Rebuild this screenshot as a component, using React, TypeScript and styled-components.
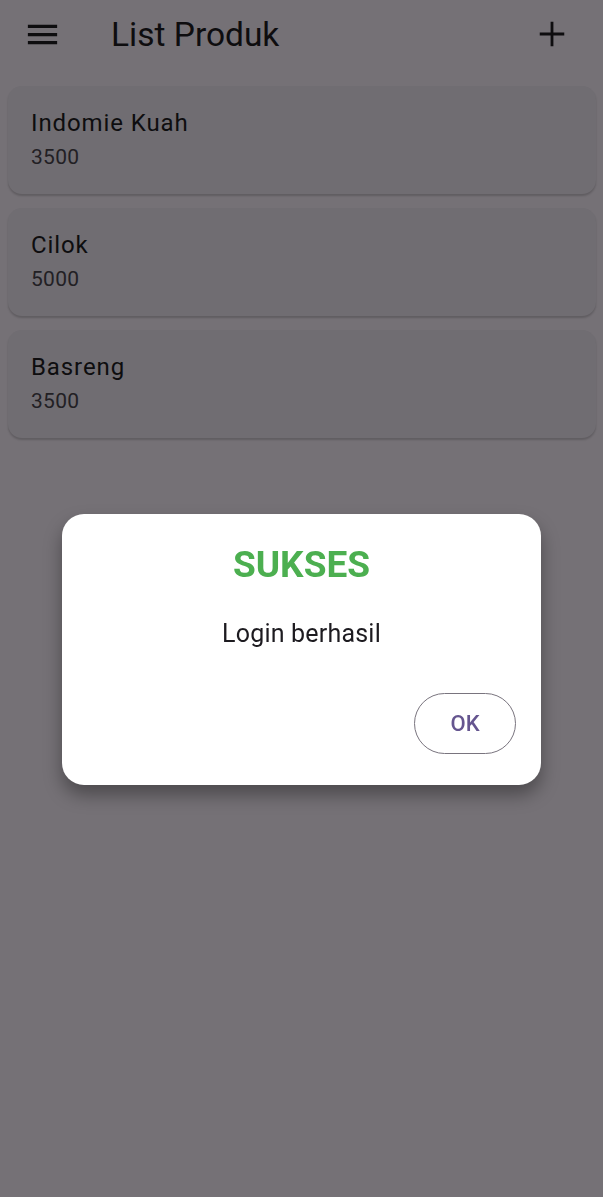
import styled, { createGlobalStyle } from 'styled-components'

const GlobalStyle = createGlobalStyle`
  html, body {
    margin: 0;
    padding: 0;
    background: #757176;
    font-family: Roboto, 'Noto Sans', sans-serif;
  }
`

const Page = styled.div`
  min-height: 1197px;
  background: #757176;
`

const AppBar = styled.header`
  height: 68px;
  display: flex;
  align-items: center;
  padding: 0 30px 0 23px;
`

const IconButton = styled.button<{ $size: number }>`
  width: ${({ $size }) => $size}px;
  height: ${({ $size }) => $size}px;
  padding: 0;
  border: none;
  background: none;
  display: flex;
  align-items: center;
  justify-content: center;
  color: #0e0d0f;
`

const Title = styled.h1`
  flex: 1;
  margin: 0 0 0 49px;
  font-size: 33.5px;
  font-weight: 400;
  color: #0e0d0f;
  letter-spacing: 0;
`

const List = styled.div`
  display: flex;
  flex-direction: column;
  gap: 14px;
  padding: 18px 7px 0 8px;
`

const Card = styled.div`
  height: 108px;
  box-sizing: border-box;
  padding: 18px 23px 20px;
  background: #706d72;
  border-radius: 14px;
  box-shadow: 0 2px 2px rgba(0, 0, 0, 0.18);
  display: flex;
  flex-direction: column;
  justify-content: center;
  gap: 8px;
`

const ItemName = styled.div`
  font-size: 24px;
  line-height: 28px;
  color: #0e0d0f;
  letter-spacing: 0.9px;
`

const ItemPrice = styled.div`
  font-size: 21px;
  line-height: 24px;
  color: #222024;
  letter-spacing: 0.3px;
`

const Overlay = styled.div`
  position: fixed;
  inset: 0;
  display: flex;
  justify-content: center;
  align-items: flex-start;
  padding-top: 514px;
`

const Dialog = styled.div`
  width: 479px;
  height: 271px;
  box-sizing: border-box;
  background: #fff;
  border-radius: 22px;
  box-shadow: 0 10px 18px rgba(0, 0, 0, 0.35);
  padding: 28px 25px 31px;
  display: flex;
  flex-direction: column;
  align-items: center;
`

const DialogTitle = styled.h2`
  margin: 0;
  font-size: 37px;
  line-height: 46px;
  font-weight: 700;
  color: #4caf50;
`

const DialogText = styled.p`
  margin: 31px 0 0;
  font-size: 25px;
  line-height: 30px;
  color: #1d1b20;
  letter-spacing: 0.2px;
`

const Actions = styled.div`
  margin-top: auto;
  align-self: stretch;
  display: flex;
  justify-content: flex-end;
`

const OutlineButton = styled.button`
  width: 102px;
  height: 61px;
  border: 1.5px solid #79747e;
  border-radius: 31px;
  background: #fff;
  font-family: Roboto, sans-serif;
  font-size: 22px;
  font-weight: 500;
  color: #65558f;
`

const products = [
  { name: 'Indomie Kuah', price: 3500 },
  { name: 'Cilok', price: 5000 },
  { name: 'Basreng', price: 3500 },
]

const App = () => {
  return (
    <>
      <GlobalStyle />
      <Page>
        <AppBar>
          <IconButton $size={39} aria-label="menu">
            <svg width="39" height="39" viewBox="0 0 24 24" fill="currentColor">
              <path d="M3 18h18v-2H3v2zm0-5h18v-2H3v2zm0-7v2h18V6H3z" />
            </svg>
          </IconButton>
          <Title>List Produk</Title>
          <IconButton $size={42} aria-label="tambah">
            <svg width="42" height="42" viewBox="0 0 24 24" fill="currentColor">
              <path d="M19 12.8h-6.2V19h-1.6v-6.2H5v-1.6h6.2V5h1.6v6.2H19v1.6z" />
            </svg>
          </IconButton>
        </AppBar>
        <List>
          {products.map((p) => (
            <Card key={p.name}>
              <ItemName>{p.name}</ItemName>
              <ItemPrice>{p.price}</ItemPrice>
            </Card>
          ))}
        </List>
      </Page>
      <Overlay>
        <Dialog>
          <DialogTitle>SUKSES</DialogTitle>
          <DialogText>Login berhasil</DialogText>
          <Actions>
            <OutlineButton>OK</OutlineButton>
          </Actions>
        </Dialog>
      </Overlay>
    </>
  )
}

export default App
